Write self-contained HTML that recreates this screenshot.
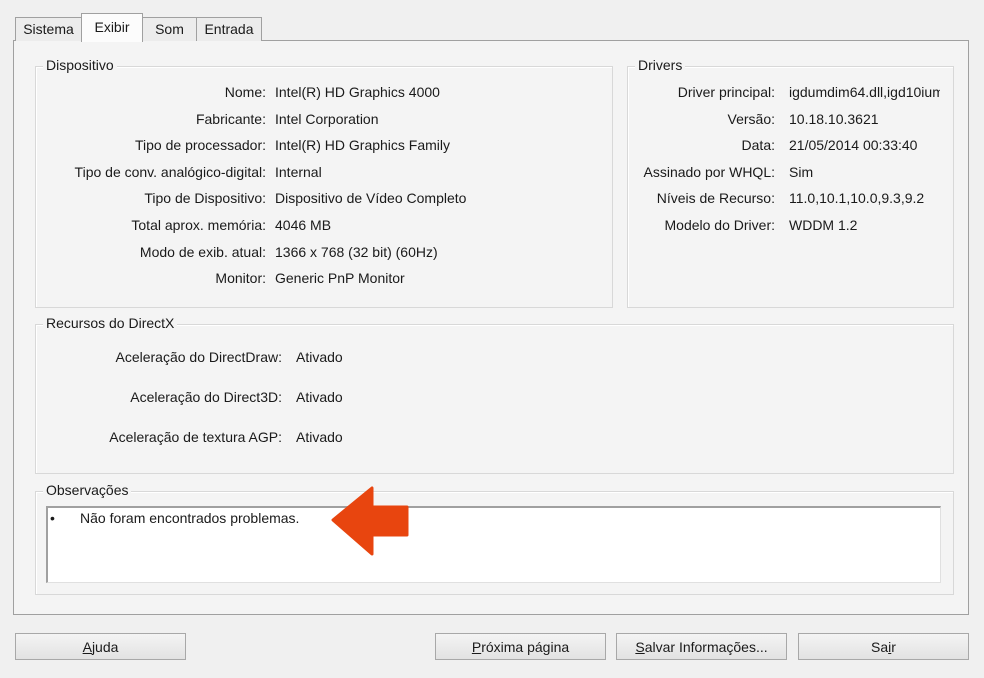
<!DOCTYPE html><html><head><style>
body{margin:0;width:984px;height:678px;background:#f0f0f0;font-family:"Liberation Sans",sans-serif;font-size:14px;color:#1a1a1a;position:relative;overflow:hidden}
.a{position:absolute;white-space:nowrap}
.tab{position:absolute;border:1px solid #a0a0a0;border-bottom:none;background:#ececec;text-align:center;line-height:22px}
.panel{position:absolute;left:13px;top:40px;width:954px;height:573px;border:1px solid #a0a0a0;background:#f4f4f4}
.grp{position:absolute;border:1px solid #d8d8d8;box-shadow:inset 1px 1px 0 #fff}
.gt{position:absolute;background:#f4f4f4;padding:0 3px;top:-10px;left:7px}
.l{position:absolute;text-align:right;white-space:nowrap}
.btn{position:absolute;top:633px;height:27px;border:1px solid #a8a8a8;background:linear-gradient(#f4f4f4,#e2e2e2);text-align:center;line-height:27px;box-sizing:border-box}
</style></head><body>
<div class="panel"></div>
<div class="tab" style="left:15px;top:17px;width:65px;height:23px">Sistema</div>
<div class="tab" style="left:142px;top:17px;width:53px;height:23px">Som</div>
<div class="tab" style="left:196px;top:17px;width:64px;height:23px">Entrada</div>
<div class="tab" style="left:81px;top:13px;width:60px;height:28px;background:#fcfcfc;line-height:26px">Exibir</div>

<div class="grp" style="left:35px;top:66px;width:576px;height:240px"><span class="gt">Dispositivo</span></div>
<div class="grp" style="left:627px;top:66px;width:325px;height:240px"><span class="gt">Drivers</span></div>
<div class="grp" style="left:35px;top:324px;width:917px;height:148px"><span class="gt">Recursos do DirectX</span></div>
<div class="grp" style="left:35px;top:491px;width:917px;height:102px"><span class="gt">Observações</span></div>
<div class="a" style="left:46px;top:506px;width:892px;height:74px;background:#fff;border-top:2px solid #a0a0a0;border-left:2px solid #a0a0a0;border-right:1px solid #e0e0e0;border-bottom:1px solid #e0e0e0"></div>
<div class="a" style="left:50px;top:510px">•</div>
<div class="a" style="left:80px;top:510px">Não foram encontrados problemas.</div>

<div class="l" style="right:718px;top:79px;line-height:26.6px">Nome:<br>Fabricante:<br>Tipo de processador:<br>Tipo de conv. analógico-digital:<br>Tipo de Dispositivo:<br>Total aprox. memória:<br>Modo de exib. atual:<br>Monitor:</div>
<div class="a" style="left:275px;top:79px;line-height:26.6px">Intel(R) HD Graphics 4000<br>Intel Corporation<br>Intel(R) HD Graphics Family<br>Internal<br>Dispositivo de Vídeo Completo<br>4046 MB<br>1366 x 768 (32 bit) (60Hz)<br>Generic PnP Monitor</div>

<div class="l" style="right:209px;top:79px;line-height:26.6px">Driver principal:<br>Versão:<br>Data:<br>Assinado por WHQL:<br>Níveis de Recurso:<br>Modelo do Driver:</div>
<div class="a" style="left:789px;top:79px;width:151px;overflow:hidden;line-height:26.6px">igdumdim64.dll,igd10iumd64<br>10.18.10.3621<br>21/05/2014 00:33:40<br>Sim<br>11.0,10.1,10.0,9.3,9.2<br>WDDM 1.2</div>

<div class="l" style="right:702px;top:337px;line-height:40px">Aceleração do DirectDraw:<br>Aceleração do Direct3D:<br>Aceleração de textura AGP:</div>
<div class="a" style="left:296px;top:337px;line-height:40px">Ativado<br>Ativado<br>Ativado</div>

<svg class="a" style="left:330px;top:486px" width="80" height="72"><path d="M3 34 L42 2 L42 21 L77 21 L77 49 L42 49 L42 68 Z" fill="#e8450f" stroke="#e8450f" stroke-width="3" stroke-linejoin="round"/></svg>

<div class="btn" style="left:15px;width:171px"><u>A</u>juda</div>
<div class="btn" style="left:435px;width:171px"><u>P</u>róxima página</div>
<div class="btn" style="left:616px;width:171px"><u>S</u>alvar Informações...</div>
<div class="btn" style="left:798px;width:171px">Sa<u>i</u>r</div>
</body></html>
